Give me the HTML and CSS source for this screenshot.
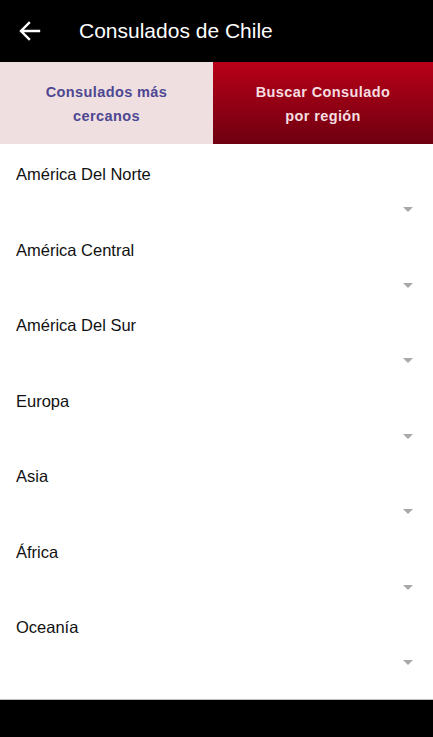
FILE: index.html
```html
<!DOCTYPE html>
<html lang="es">
  <head>
    <meta charset="UTF-8" />
    <meta name="viewport" content="width=device-width, initial-scale=1.0" />
    <title>Consulados de Chile</title>
    <link rel="stylesheet" href="styles.css">
  </head>
  <body>
    <div class="app">
      <header class="topbar">
        <svg class="back" width="22" height="20" viewBox="0 0 22 20">
          <path d="M20 10H3M10 2L2 10l8 8" fill="none" stroke="#fff" stroke-width="2.4" stroke-linecap="square"/>
        </svg>
        <h1>Consulados de Chile</h1>
      </header>

      <nav class="tabs">
        <a href="#" class="tab">Consulados más<br>cercanos</a>
        <a href="#" class="tab active">Buscar Consulado<br>por región</a>
      </nav>

      <ul class="regions">
        <li class="region"><span>América Del Norte</span><i class="caret"></i></li>
        <li class="region"><span>América Central</span><i class="caret"></i></li>
        <li class="region"><span>América Del Sur</span><i class="caret"></i></li>
        <li class="region"><span>Europa</span><i class="caret"></i></li>
        <li class="region"><span>Asia</span><i class="caret"></i></li>
        <li class="region"><span>África</span><i class="caret"></i></li>
        <li class="region"><span>Oceanía</span><i class="caret"></i></li>
      </ul>

      <footer class="navbar"></footer>
    </div>
  </body>
</html>
```

FILE: styles.css
```css
body {
  margin: 0;
  font-family: "Liberation Sans", Arial, sans-serif;
  background-color: #fff;
}
.app {
  display: flex;
  flex-direction: column;
  height: 737px;
}
.topbar {
  height: 62px;
  background-color: #000;
  display: flex;
  align-items: center;
  padding-left: 19px;
  box-sizing: border-box;
}
.back {
  margin-right: 38px;
}
.topbar h1 {
  margin: 0;
  color: #fff;
  font-size: 21px;
  font-weight: normal;
}
.tabs {
  display: grid;
  grid-template-columns: 213px 1fr;
  height: 82px;
}
.tab {
  display: flex;
  align-items: center;
  justify-content: center;
  text-align: center;
  text-decoration: none;
  font-size: 14.5px;
  font-weight: bold;
  line-height: 24px;
  letter-spacing: 0.4px;
  color: #4d4792;
  background-color: #f0dfe0;
  padding-top: 2px;
}
.tab.active {
  color: #f6dde0;
  background: linear-gradient(#b80018, #6e0010);
}
.regions {
  list-style: none;
  margin: 0;
  padding: 0;
  flex: 1;
}
.region {
  height: 75.5px;
  box-sizing: border-box;
  padding: 20px 20px 0 16px;
  display: flex;
  flex-direction: column;
  font-size: 16.5px;
  color: #111;
}
.region span {
  line-height: 20px;
}
.caret {
  align-self: flex-end;
  margin-top: 23px;
  width: 0;
  height: 0;
  border-left: 5px solid transparent;
  border-right: 5px solid transparent;
  border-top: 5px solid #a8a8a8;
}
.navbar {
  height: 37px;
  background-color: #000;
  border-top: 1px solid #bdbdbd;
}
```
